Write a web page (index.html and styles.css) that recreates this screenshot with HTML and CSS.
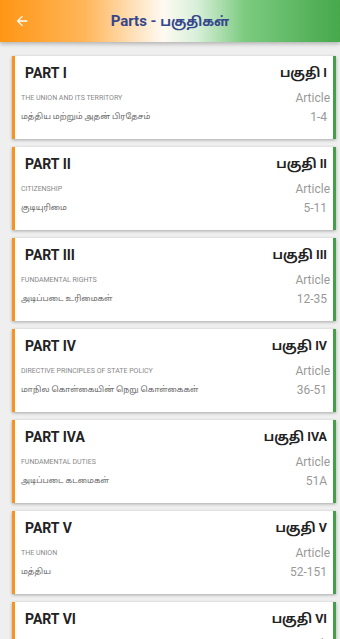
FILE: index.html
```html
<!DOCTYPE html>
<html lang="ta">
<head>
    <meta charset="UTF-8">
    <meta name="viewport" content="width=device-width, initial-scale=1.0">
    <title>Parts - பகுதிகள்</title>
    <link rel="stylesheet" href="styles.css">
</head>
<body>
    <div class="toolbar">
        <button class="back">
            <svg width="16" height="16" viewBox="0 0 24 24"><path d="M20 11H7.83l5.59-5.59L12 4l-8 8 8 8 1.41-1.41L7.83 13H20v-2z" fill="#fff"/></svg>
        </button>
        <h1 class="title">Parts - <span class="title-ta">பகுதிகள்</span></h1>
    </div>

    <div class="list">
        <div class="card">
            <div class="row"><span class="part">PART I</span><span class="part-ta">பகுதி I</span></div>
            <div class="row"><span class="name">THE UNION AND ITS TERRITORY</span><span class="label">Article</span></div>
            <div class="row"><span class="name-ta">மத்திய மற்றும் அதன் பிரதேசம்</span><span class="range">1-4</span></div>
        </div>
        <div class="card">
            <div class="row"><span class="part">PART II</span><span class="part-ta">பகுதி II</span></div>
            <div class="row"><span class="name">CITIZENSHIP</span><span class="label">Article</span></div>
            <div class="row"><span class="name-ta">குடியுரிமை</span><span class="range">5-11</span></div>
        </div>
        <div class="card">
            <div class="row"><span class="part">PART III</span><span class="part-ta">பகுதி III</span></div>
            <div class="row"><span class="name">FUNDAMENTAL RIGHTS</span><span class="label">Article</span></div>
            <div class="row"><span class="name-ta">அடிப்படை உரிமைகள்</span><span class="range">12-35</span></div>
        </div>
        <div class="card">
            <div class="row"><span class="part">PART IV</span><span class="part-ta">பகுதி IV</span></div>
            <div class="row"><span class="name">DIRECTIVE PRINCIPLES OF STATE POLICY</span><span class="label">Article</span></div>
            <div class="row"><span class="name-ta">மாநில கொள்கையின் நெறு கொள்கைகள்</span><span class="range">36-51</span></div>
        </div>
        <div class="card">
            <div class="row"><span class="part">PART IVA</span><span class="part-ta">பகுதி IVA</span></div>
            <div class="row"><span class="name">FUNDAMENTAL DUTIES</span><span class="label">Article</span></div>
            <div class="row"><span class="name-ta">அடிப்படை கடமைகள்</span><span class="range">51A</span></div>
        </div>
        <div class="card">
            <div class="row"><span class="part">PART V</span><span class="part-ta">பகுதி V</span></div>
            <div class="row"><span class="name">THE UNION</span><span class="label">Article</span></div>
            <div class="row"><span class="name-ta">மத்திய</span><span class="range">52-151</span></div>
        </div>
        <div class="card">
            <div class="row"><span class="part">PART VI</span><span class="part-ta">பகுதி VI</span></div>
            <div class="row"><span class="name">THE STATES</span><span class="label">Article</span></div>
            <div class="row"><span class="name-ta">மாநிலங்கள்</span><span class="range">152-237</span></div>
        </div>
    </div>
</body>
</html>
```
FILE: styles.css
```css
* {
    margin: 0;
    padding: 0;
    box-sizing: border-box;
}

body {
    font-family: Roboto, "Noto Sans Tamil", "Noto Sans", sans-serif;
    background-color: #efefef;
    height: 100vh;
    overflow: hidden;
}

.toolbar {
    height: 42px;
    display: flex;
    align-items: center;
    justify-content: center;
    position: relative;
    background: linear-gradient(to right, #ff9514 0%, #ffb65a 25%, #fffaf2 48%, #d8efd9 58%, #7ccb80 72%, #46a84b 100%);
    box-shadow: 0 2px 4px rgba(0, 0, 0, 0.25);
}

.back {
    position: absolute;
    left: 14px;
    top: 13px;
    background: none;
    border: none;
    width: 16px;
    height: 16px;
}

.title {
    font-size: 15px;
    font-weight: 700;
    color: #34478a;
}

.title-ta {
    font-size: 13px;
}

.list {
    padding: 14px 4px 0 12px;
    display: flex;
    flex-direction: column;
    gap: 8px;
}

.card {
    flex-shrink: 0;
    height: 83px;
    background-color: #fff;
    border-left: 3px solid #f7941d;
    border-right: 3px solid #43a047;
    box-shadow: 0 1px 3px rgba(0, 0, 0, 0.3);
    padding: 7px 3px 0 6px;
}

.row {
    display: flex;
    justify-content: space-between;
    align-items: center;
    height: 19px;
}

.row:first-child {
    height: 20px;
    margin-bottom: 5px;
}

.part {
    font-size: 14px;
    font-weight: 700;
    color: #222;
    padding-left: 4px;
}

.part-ta {
    font-size: 12.5px;
    font-weight: 700;
    color: #222;
    padding-right: 3px;
}

.name {
    font-size: 7px;
    color: #888;
    text-transform: uppercase;
}

.name-ta {
    font-size: 8px;
    color: #666;
}

.label,
.range {
    font-size: 12px;
    color: #999;
}

.range {
    padding-right: 3px;
}
```
